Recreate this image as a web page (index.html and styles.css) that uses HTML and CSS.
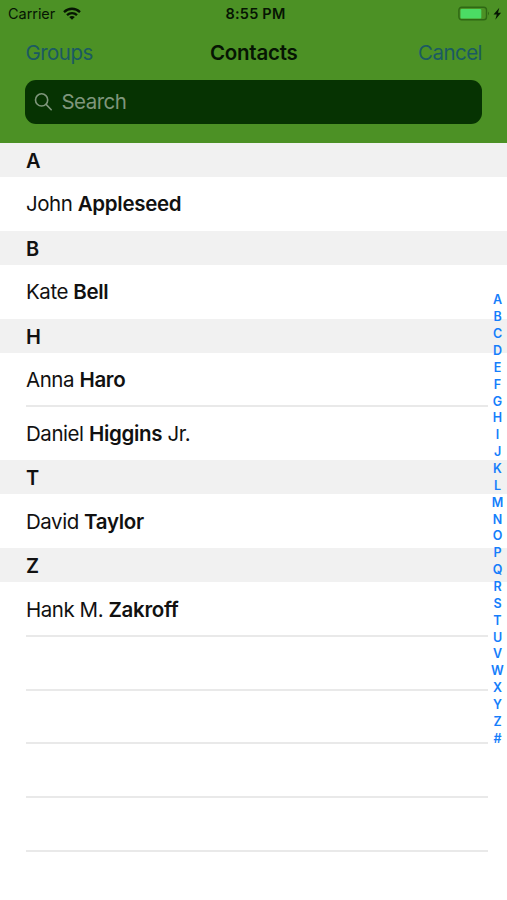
FILE: index.html
```html
<!DOCTYPE html>
<html lang="en">
<head>
<meta charset="utf-8">
<title>Contacts</title>
<link rel="stylesheet" href="styles.css">
</head>
<body>
<div class="phone">
  <header class="header">
    <div class="status">
      <div class="status-left">
        <span class="carrier">Carrier</span>
        <svg class="wifi" viewBox="0 0 18 13" width="18" height="13"><g fill="none" stroke="#061503" stroke-width="2.3"><path d="M1 5.1C5.6.6 12.4.6 17 5.1"/><path d="M4 8.2c2.9-2.8 7.1-2.8 10 0"/></g><path fill="#061503" d="M6.2 10.1c1.600-1.500 4-1.500 5.600 0L9 12.800z"/></svg>
      </div>
      <span class="clock">8:55 PM</span>
      <div class="status-right">
        <svg width="46" height="16" viewBox="0 0 46 16"><rect x="1.900" y="1.200" width="27.600" height="12.600" rx="2.800" fill="none" stroke="#2f6815" stroke-width="1.400"/><rect x="3.500" y="2.900" width="20.800" height="9.500" rx="1" fill="#4bdc64"/><path d="M31 5.600q2 1.900 0 3.800z" fill="#2f6815"/><path d="M42.300 1.800 36.500 8.600H39.800L38.300 13.700 44.100 6.700H41z" fill="#061503"/></svg>
      </div>
    </div>
    <nav class="nav">
      <a class="link groups">Groups</a>
      <h1 class="title">Contacts</h1>
      <a class="link cancel">Cancel</a>
    </nav>
    <div class="search">
      <svg width="20" height="20" viewBox="0 0 20 20" fill="none" stroke="#7f967c" stroke-width="1.600" stroke-linecap="round"><circle cx="7.600" cy="7.900" r="6.100"/><path d="m12.100 12.400 5.100 5.300"/></svg>
      <span>Search</span>
    </div>
  </header>
  <main class="list">
    <h2 class="section">A</h2>
    <div class="row"><span class="name">John <b>Appleseed</b></span></div>
    <h2 class="section">B</h2>
    <div class="row"><span class="name">Kate <b>Bell</b></span></div>
    <h2 class="section">H</h2>
    <div class="row lined"><span class="name">Anna <b>Haro</b></span></div>
    <div class="row"><span class="name">Daniel <b>Higgins</b> Jr.</span></div>
    <h2 class="section">T</h2>
    <div class="row"><span class="name">David <b>Taylor</b></span></div>
    <h2 class="section">Z</h2>
    <div class="row lined"><span class="name">Hank M. <b>Zakroff</b></span></div>
    <div class="row lined"></div>
    <div class="row lined"></div>
    <div class="row lined"></div>
    <div class="row lined"></div>
  </main>
  <aside class="index">
    <span>A</span><span>B</span><span>C</span><span>D</span><span>E</span><span>F</span><span>G</span><span>H</span><span>I</span><span>J</span><span>K</span><span>L</span><span>M</span><span>N</span><span>O</span><span>P</span><span>Q</span><span>R</span><span>S</span><span>T</span><span>U</span><span>V</span><span>W</span><span>X</span><span>Y</span><span>Z</span><span>#</span>
  </aside>
</div>
</body>
</html>
```

FILE: styles.css
```css
* { box-sizing: border-box; }

body {
  margin: 0;
  background: #fff;
  color: #111;
  font-family: Inter, "Liberation Sans", sans-serif;
}

.phone {
  position: relative;
  width: 507px;
  height: 900px;
  overflow: hidden;
}

.header {
  height: 143px;
  background: #4c9125;
}

.status {
  display: grid;
  grid-template-columns: 1fr auto 1fr;
  align-items: center;
  height: 27px;
  padding: 0 4px 0 8px;
  color: #061503;
}

.status-left {
  display: flex;
  align-items: center;
  gap: 7.5px;
}

.carrier {
  font-size: 14.5px;
  letter-spacing: -0.05px;
}

.wifi { margin-top: -1px; }

.clock {
  font-size: 14.5px;
  font-weight: 600;
  letter-spacing: 0.2px;
}

.status-right {
  display: flex;
  justify-content: flex-end;
}

.nav {
  display: grid;
  grid-template-columns: 1fr auto 1fr;
  align-items: center;
  height: 50px;
  padding: 0 25px 0 25.5px;
}

.link {
  color: #1b5a62;
  font-size: 20.5px;
  letter-spacing: -0.55px;
}

.cancel { text-align: right; }

.title {
  margin: 0;
  color: #061503;
  font-size: 20.5px;
  font-weight: 600;
  letter-spacing: -0.25px;
}

.search {
  display: flex;
  align-items: center;
  gap: 7.5px;
  height: 44px;
  margin: 3px 24.6px 0 25.4px;
  padding: 0 8.5px;
  border-radius: 11px;
  background: #063302;
  color: #7f967c;
  font-size: 20.5px;
  letter-spacing: -0.5px;
}

.search span { margin-top: -2px; }

.section {
  height: 34px;
  margin: 0;
  padding-left: 26px;
  background: #f1f1f1;
  font-size: 20px;
  font-weight: 600;
  line-height: 36px;
}

.row {
  display: flex;
  align-items: center;
  height: 53.8px;
  margin: 0 19px 0 26px;
}

.lined {
  padding-top: 2px;
  border-bottom: 1px solid #e9e9e9;
  box-shadow: 0 1px 0 #e9e9e9;
}

.name {
  font-size: 20.5px;
  letter-spacing: -0.45px;
  white-space: pre;
}

.name b {
  font-weight: 600;
  letter-spacing: -0.3px;
}

.index {
  position: absolute;
  top: 292.4px;
  right: 0;
  display: flex;
  flex-direction: column;
  width: 19px;
  color: #157efb;
  font-size: 12.5px;
  font-weight: 600;
  line-height: 16.86px;
  text-align: center;
}
```
